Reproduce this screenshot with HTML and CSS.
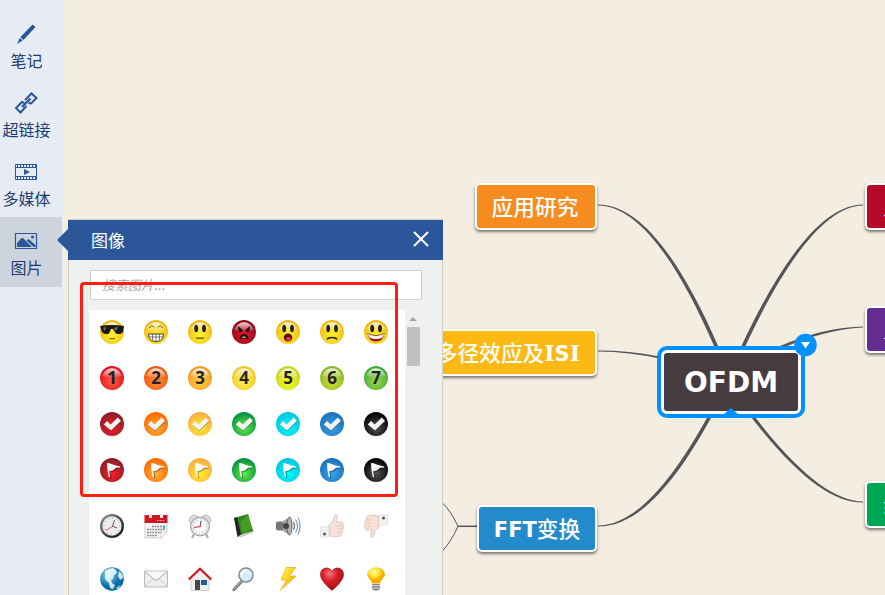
FILE: index.html
```html
<!DOCTYPE html>
<html lang="zh-CN">
<head>
    <meta charset="UTF-8">
    <meta name="viewport" content="width=device-width, initial-scale=1.0">
    <title>OFDM</title>
    <link rel="stylesheet" href="styles.css">
</head>
<body>

    <nav class="sidebar">
        <a class="tool">
            <svg width="24" height="24" viewBox="0 0 24 24"><path d="M18.500 2.500l3 2.500L9.500 18 6.300 15.200zM5.700 16l3 2.600L3 22z" fill="#2b579a"/></svg>
            <span>笔记</span>
        </a>
        <a class="tool">
            <svg width="24" height="24" viewBox="0 0 24 24" fill="none" stroke="#2b579a" stroke-width="2">
                <path d="M12.500 7.500l5-5 5 4.500-5.500 5.500-2.500-.5M11 9l1.500-1.500M12.500 15l-6 6.500-4.500-4.500 6-6 2.500 1"/>
                <path d="M8 16l8.500-8.500" stroke-width="2.400"/>
            </svg>
            <span>超链接</span>
        </a>
        <a class="tool">
            <svg width="24" height="24" viewBox="0 0 24 24">
                <path d="M1.500 4.500h21v15h-21zM1 7.500h22M1 16.500h22" fill="none" stroke="#2b579a"/>
                <path d="M3 6h19M3 18h19" stroke="#2b579a" stroke-width="2" stroke-dasharray="1 2"/>
                <path d="M10 9l6 3-6 3z" fill="#2b579a"/>
            </svg>
            <span>多媒体</span>
        </a>
        <a class="tool active">
            <svg width="24" height="24" viewBox="0 0 24 24">
                <path d="M1.500 4.500h21v15h-21z" fill="none" stroke="#2b579a" stroke-width="1.200"/>
                <path d="M3 18v-4l4.500-5h1.500l9 9zM12.500 11.500l2-1.500 7 6v2h-2z" fill="#2b579a"/>
                <circle cx="18.500" cy="8" r="1.600" fill="#2b579a"/>
            </svg>
            <span>图片</span>
        </a>
    </nav>

    <main class="canvas">
        <svg class="lines" width="885" height="595" fill="#54555a">
            <path d="M598 204.500C641 204.500 681 261 718.500 347L714.500 347C678 263 639 206 598 205.500z"/>
            <path d="M863 204.500C823 204.500 781 261 741 347L745 347C784 263 825 206 863 205.500z"/>
            <path d="M598 350.500Q630 350.500 658 356.300V358.300Q630 352 598 351.500z"/>
            <path d="M863 326.500Q825 327 780 346V349Q825 329.500 863 327.500z"/>
            <path d="M598 525.500C632 525 667 490 707.500 417L711.500 417C670 493 633 527 598 526.500z"/>
            <path d="M863 501.500C836 501 801 477 755 417L751 417C799 479 834 503 863 502.500z"/>
            <path d="M442 502.500Q451 511 458 526.300Q451 542 442 551.500" fill="none" stroke="#54555a"/>
            <path d="M458 526.300H478" stroke="#54555a" stroke-width="1.500"/>
        </svg>

        <div class="node research">应用研究</div>
        <div class="node multipath">多径效应及<b><i>I</i>S<i>I</i></b></div>
        <div class="node fft"><b>FFT</b>变换</div>
        <div class="node right1">人</div>
        <div class="node right2">人</div>
        <div class="node right3">纟</div>

        <div class="root">OFDM</div>
        <svg class="marks" width="160" height="90" viewBox="0 0 160 90">
            <path d="M73 81l8-7 8 7z" fill="#0091ff"/>
            <circle cx="155.500" cy="11" r="11.200" fill="#0091ff"/>
            <path d="M151 8h9l-4.500 6.500z" fill="#fff"/>
        </svg>
    </main>

    <section class="panel">
        <header>
            <h1>图像</h1>
            <svg width="16" height="16" viewBox="0 0 16 16"><path d="M1 1l14 14M15 1L1 15" stroke="#fff" stroke-width="2"/></svg>
        </header>
        <div class="search">搜索图片...</div>
        <div class="browser">
            <div class="icons">
                <div class="grid" id="badges"></div>
                <div class="grid objects" id="objects"></div>
            </div>
            <div class="scrollbar">
                <div class="up"></div>
                <div class="thumb"></div>
            </div>
        </div>
    </section>

    <div class="frame"></div>

    <script src="icons.js"></script>
</body>
</html>
```
FILE: styles.css
```css
* {
    box-sizing: border-box;
}
body {
    margin: 0;
    height: 595px;
    overflow: hidden;
    position: relative;
    display: flex;
    background: #f4ede1;
    font-family: "Noto Sans CJK SC", sans-serif;
}
.sidebar {
    width: 63px;
    height: 595px;
    padding-top: 10px;
    background: #e6ebf4;
}
.tool {
    display: flex;
    flex-direction: column;
    align-items: center;
    width: 62px;
    height: 69px;
    padding: 12px 9px 0 0;
    font-size: 16px;
    line-height: 28px;
    white-space: nowrap;
    color: #1f3c70;
}
.tool svg {
    flex: none;
    margin-right: 2px;
}
.tool.active {
    height: 70px;
    background: #ced4de;
}

/* mind map */
.canvas {
    position: absolute;
    inset: 0 0 0 63px;
    overflow: hidden;
}
.lines {
    position: absolute;
    left: -63px;
    top: 0;
}
.node {
    position: absolute;
    height: 47px;
    border: 2px solid #fff;
    border-radius: 5px;
    box-shadow: 0 2px 3px rgba(0, 0, 0, 0.5);
    color: #fff;
    font: 500 21.700px/45px "DejaVu Sans", "Noto Sans CJK SC", sans-serif;
    text-align: center;
    white-space: nowrap;
}
.node b {
    font-size: 21px;
}
.node i {
    font-family: "DejaVu Serif", serif;
    font-style: normal;
    font-size: 22px;
}
.research {
    left: 412px;
    top: 183px;
    width: 122px;
    padding-right: 2px;
    background: #f68b1f;
}
.multipath {
    left: 348px;
    top: 329px;
    width: 186px;
    padding-right: 15px;
    text-align: right;
    background: #fdb913;
}
.fft {
    left: 414px;
    top: 505px;
    width: 120px;
    background: #238acb;
}
.right1, .right2, .right3 {
    left: 802px;
    width: 130px;
    padding-left: 16px;
    text-align: left;
}
.right1 {
    top: 183px;
    background: #b50b29;
}
.right2 {
    top: 306px;
    background: #662c91;
}
.right3 {
    top: 481px;
    background: #00a651;
}
.root {
    position: absolute;
    left: 598px;
    top: 350px;
    width: 140px;
    height: 64px;
    border: 3px solid #fff;
    border-radius: 6px;
    box-shadow: 0 0 0 4px #0091ff;
    background: #463c3f;
    color: #fff;
    font: bold 28px/59px "DejaVu Sans", sans-serif;
    text-align: center;
}
.marks {
    position: absolute;
    left: 587px;
    top: 334px;
    overflow: visible;
}

/* image panel */
.panel {
    position: absolute;
    left: 68px;
    top: 219px;
    width: 375px;
    height: 376px;
    border: 1px solid #cfcfcf;
    border-bottom: 0;
    background: #eff1ef;
}
.panel header {
    position: relative;
    display: flex;
    align-items: center;
    justify-content: space-between;
    height: 40px;
    margin: 0 -1px;
    padding: 0 14px 2px 23px;
    background: #2b579a;
    color: #fff;
}
.panel header::before {
    content: "";
    position: absolute;
    left: -11px;
    top: 9px;
    border: solid transparent;
    border-width: 11px 11px 11px 0;
    border-right-color: #2b579a;
}
.panel h1 {
    margin: 0;
    font-size: 17px;
    font-weight: normal;
}
.search {
    width: 332px;
    height: 30px;
    margin: 10px 0 0 21px;
    padding-left: 11px;
    border: 1px solid #d0d0d0;
    background: #fff;
    color: #a5a5a5;
    font-size: 13px;
    font-style: italic;
    line-height: 28px;
}
.browser {
    display: flex;
    height: 285px;
    margin: 10px 0 0 20px;
}
.icons {
    width: 316px;
    padding-left: 1px;
    background: #fff;
}
.grid {
    display: grid;
    grid-template-columns: repeat(7, 44px);
    grid-auto-rows: 46px;
    place-items: center;
    margin-top: -1px;
}
.objects {
    grid-auto-rows: 53px;
    margin-top: 6px;
}
.grid svg {
    display: block;
    overflow: visible;
}
.grid text {
    font: bold 17px "Open Sans", sans-serif;
    text-anchor: middle;
    fill: #222;
}
.scrollbar {
    width: 16px;
    padding: 7px 1px 0 2px;
    background: #f0f0f0;
}
.up {
    width: 8px;
    margin-left: 2px;
    border: solid transparent;
    border-width: 0 4px 4px;
    border-bottom-color: #a3a3a3;
}
.thumb {
    height: 39px;
    margin-top: 6px;
    background: #c1c1c1;
}
.frame {
    position: absolute;
    left: 80px;
    top: 282px;
    width: 318px;
    height: 215px;
    border: 3px solid #ff1f12;
    border-radius: 4px;
}
```
FILE: icons.js
```js
let gradientId = 0;

function icon(body) {
    return `<svg width="24" height="24" viewBox="0 0 24 24">${body}</svg>`;
}

// round badge: light colour in the middle, dark colour on the rim
function ball(inner, outer, body, gloss) {
    const id = 'g' + gradientId++;
    let shine = gloss ? '<path d="M2.5 10a9.700 9.700 0 0 1 19 0Q12 13 2.500 10z" fill="url(#shine)"/>' : '';
    return icon(`<defs><radialGradient id="${id}" cx=".5" cy=".65" r=".6"><stop stop-color="${inner}"/><stop offset="1" stop-color="${outer}"/></radialGradient>
        <linearGradient id="shine" x2="0" y2="1"><stop stop-color="#fff" stop-opacity=".85"/><stop offset="1" stop-color="#fff" stop-opacity=".1"/></linearGradient></defs>
        <circle cx="12" cy="12" r="12" fill="url(#${id})"/>${shine}${body}`);
}

const eyes = '<ellipse cx="8.200" cy="8.500" rx="1.900" ry="3.800" fill="#222"/><ellipse cx="16" cy="8.500" rx="1.900" ry="3.800" fill="#222"/>';

const faces = [
    '<path d="M0 6q12-2 24 0l-1 6q-2 3-7 1.500L13 9h-2l-2 4.500q-5 1.500-7-1.500z" fill="#181818"/><path d="M3 8l3-1-1 4zM14 8l4-1-2 4z" fill="#777"/><path d="M9.500 18.500q3 1 5.500-.5" stroke="#553c00" fill="none"/>',
    '<path d="M5.500 8q2-4 4.500-.5M14 7.500q2.500-3.500 4.500.5" fill="none" stroke="#6b5200"/><path d="M4.500 14h15q0 7.500-7.500 7.500T4.500 14z" fill="#fff" stroke="#453b20"/><path d="M5 17h14M8.500 14v6.500M12 14v7M15.500 14v6.500" stroke="#555" stroke-width=".8"/>',
    eyes + '<path d="M8 18.200h8" stroke="#77600c" stroke-width="1.500"/>',
    '<path d="M6 6l5 4.500-2 1.500q-3 0-3-6zM18 6l-5 4.500 2 1.500q3 0 3-6z" fill="#210306"/><path d="M7.500 19.500q0-5.500 4.500-5.500t4.500 5.500l-3-1h-3z" fill="#350408"/><path d="M9.500 17.500q2.500-2 5 0z" fill="#fff"/>',
    eyes + '<ellipse cx="12" cy="17.500" rx="4.300" ry="4" fill="#5c0d08"/><ellipse cx="12.500" cy="19" rx="2.700" ry="2" fill="#df3c38"/>',
    eyes + '<path d="M7 19.500q1-2 5-2t5 2" stroke="#222" stroke-width="1.500" fill="none"/>',
    eyes + '<path d="M3.500 13.500q8.500 4 17 0-1.500 8-8.500 8t-8.500-8z" fill="#a60e20"/><path d="M3.500 13.500q8.500 4 17 0l-2 4q-6.500 3-13 0z" fill="#fff"/><path d="M3.500 13.500q8.500 4 17 0" fill="none" stroke="#533400" stroke-width=".7"/>'
];
const numbers = [['#ff6044', '#e30c1c'], ['#ff8b38', '#ed5910'], ['#ffd33e', '#f6982b'], ['#fff04b', '#edc82b'], ['#f5ff28', '#c7d321'], ['#d1df35', '#88ba29'], ['#a4d24e', '#3fac39']];
const colors = [['#ff1d24', '#8c1d2c'], ['#ffb13f', '#ff6900'], ['#fff22e', '#fbac43'], ['#66ef49', '#079340'], ['#00fbff', '#02c7dd'], ['#39a3e8', '#1d72bc'], ['#555', '#030303']];

const check = '<path d="M4.500 13.500l3-3.300 3.500 3.500 7.500-7 3 3.300L11 19.500z" fill="#000" opacity=".3"/><path d="M3.800 12.500l3.200-3.500 3.600 3.500L17.800 5.500l3.200 3.500L11 18.600z" fill="#f3f3f3"/>';
const flag = '<path d="M8 6l13 3.500-.5 1.300q-4-.5-6 2.200l-4 1.500.9 5.700-1.700.3z" fill="#000" opacity=".3"/><path d="M7 5q1.500-.5 5 1.300 3.500 1.500 8.200 2.200v1.200q-4.500-.8-6.700 2.300-1.500 1-4.300 1.300l.9 6H8.800Q7 12.500 7 5z" fill="#fafafa"/>';

let html = '';
faces.forEach((face, i) => html += i === 3 ? ball('#d91d2a', '#8e0818', face, true) : ball('#fff52e', '#eeb714', face, true));
numbers.forEach((c, i) => html += ball(c[0], c[1], `<text x="12" y="18">${i + 1}</text>`, true));
colors.forEach(c => html += ball(c[0], c[1], check));
colors.forEach(c => html += ball(c[0], c[1], flag));
document.getElementById('badges').innerHTML = html;

const hand = '<path d="M9 11l4-3.500 1.500-6q.5-1.500 2-.5 1.500 1.500.5 4L16 8h5.500q1.500.2 1.500 2 1 1 .2 2.800.8 1.500-.4 2.800.5 1.700-.8 2.600 0 2-1.500 3.800Q14 24 9 21.500z" fill="#f7e0d5" stroke="#d9b9aa" stroke-width=".7"/><path d="M16.500 11.500h6M17 15h5.500M17 18.300h5" stroke="#dcbba9" stroke-width=".6"/><path d="M.5 13h8.500v10H.5z" fill="#f2f2f2" stroke="#d2d2d2" stroke-width=".6"/><circle cx="4.500" cy="20" r="1.500" fill="#555"/>';

const objects = [
    // clock
    '<defs><linearGradient id="metal" x2="1" y2="1"><stop stop-color="#999"/><stop offset="1" stop-color="#080808"/></linearGradient></defs><circle cx="12" cy="12" r="12" fill="url(#metal)"/><circle cx="12" cy="12" r="9.700" fill="#ededed"/><circle cx="12" cy="12" r="8" fill="none" stroke="#777" stroke-dasharray=".7 3.490"/><path d="M12.500 12.500l2-6.500M12 12l5 2" stroke="#333" stroke-width=".8"/><path d="M13 12l-7 4.500" stroke="#e44" stroke-width=".9"/>',
    // calendar
    '<path d="M1 7h22v10l-6 7H1z" fill="#f5f5f5" stroke="#bbb" stroke-width=".7"/><path d="M.5 1h23v8H.5z" fill="#ce1720"/><path d="M5 0h3v4H5zM16 0h3v4h-3z" fill="#eee"/><path d="M13 6.500h7" stroke="#f3b5b5" stroke-dasharray="1 .5"/><path d="M8 12.500h12M3 15.500h17M3 18.500h15M3 21.500h10" stroke="#7b7b7b" stroke-width="1.300" stroke-dasharray="1.700 1"/><path d="M19 11.500h2v4h-2z" fill="#48afc4"/><path d="M17 24v-6h6z" fill="#fff" stroke="#bbb" stroke-width=".6"/>',
    // alarm clock
    '<path d="M6 20l-2 4M18 20l2 4" stroke="#aaa" stroke-width="2"/><path d="M1 7Q1 1 8 1l2 2-7 6zM23 7q0-6-7-6l-2 2 7 6z" fill="#ddd" stroke="#aaa" stroke-width=".7"/><circle cx="12" cy="12.500" r="9.500" fill="#ddd" stroke="#9c9c9c"/><circle cx="12" cy="12.500" r="7.500" fill="#fafafa"/><circle cx="12" cy="12.500" r="6.500" fill="none" stroke="#888" stroke-dasharray=".7 2.700"/><path d="M12 13l1-6" stroke="#444"/><path d="M12.500 12.500l-6.500 1" stroke="#e22"/>',
    // book
    '<path d="M2 4l14-4 5.500 18L8 23z" fill="#31851b"/><path d="M8 8l8-7 4 13-9 7z" fill="#57ad2c" opacity=".6"/><path d="M2 4l3-1 4.500 19.500-4 .5z" fill="#222"/><path d="M6 23l2-2 13-4 .5 1.500L9 23.500z" fill="#cfcfcf"/>',
    // speaker
    '<path d="M0 8.500l2-1h5L14 3v18.500l-7-5H2l-2-1z" fill="#777"/><path d="M7 7.500L14 3v18.500l-7-5z" fill="#a5a5a5"/><ellipse cx="13.500" cy="12" rx="2.500" ry="9" fill="#b4b4b4" stroke="#666"/><circle cx="10" cy="12" r="3" fill="#444"/><path d="M17.500 8q2 4 0 8" fill="none" stroke="#777" stroke-width="1.200"/><path d="M19.500 5.500q4 6.500 0 13M22 3.500q4 8.500 0 17" fill="none" stroke="#5488ba"/>',
    hand,
    `<g transform="rotate(180 12 12)">${hand}</g>`,
    // globe
    '<defs><radialGradient id="sea" cx=".35" cy=".3"><stop stop-color="#92dbf5"/><stop offset="1" stop-color="#086fa5"/></radialGradient></defs><circle cx="12" cy="12" r="11.800" fill="url(#sea)"/><path d="M5 4q4-3 8-3l3 2 1 3-3 2-1 4-2 1 1 3 3 2-2 4-3-1-1-5-4-4V7zM19 4q4 3 4 7l-3 2-2-4zM16 21l5-3-3 4z" fill="#f2fbff" opacity=".85"/>',
    // mail
    '<path d="M.5 4h23v16H.5z" fill="#efefef" stroke="#bbb"/><path d="M1 19.500l8-8M23 19.500l-8-8" stroke="#ccc"/><path d="M1 4.500l9 8q2 1.500 4 0l9-8" fill="#f8f8f8" stroke="#aaa"/>',
    // house
    '<path d="M3 10l9-8 9 8v13.500H3z" fill="#eee" stroke="#bbb" stroke-width=".6"/><path d="M7 13h5v10H7z" fill="#474747"/><path d="M13 13h6v5h-6z" fill="#245b91"/><path d="M.8 12.500L12 1.700l11.200 10.800" fill="none" stroke="#d3151b" stroke-width="2.200"/>',
    // magnifier
    '<path d="M9.500 14.500l-7.500 8" stroke="#777" stroke-width="3.200" stroke-linecap="round"/><path d="M9 14.500l-7 7.500" stroke="#ccc" stroke-linecap="round"/><circle cx="14" cy="8" r="7" fill="#d5ecfb" stroke="#888" stroke-width="1.500"/><path d="M9.500 8q1-4.500 5-4.500" fill="none" stroke="#fff" stroke-width="2"/>',
    // lightning
    '<defs><linearGradient id="bolt" x2="1" y2="1"><stop offset=".2" stop-color="#fff02c"/><stop offset="1" stop-color="#f28b00"/></linearGradient></defs><path d="M10 .5h9.500L13.500 9H20L4.500 23.500 10.500 13H5z" fill="url(#bolt)" stroke="#f3a225" stroke-width=".7"/>',
    // heart
    '<defs><radialGradient id="heart" cx=".4" cy=".25" r=".8"><stop stop-color="#f77780"/><stop offset=".4" stop-color="#d7212a"/><stop offset="1" stop-color="#9e0810"/></radialGradient></defs><path d="M12 23.500C7 19 .5 13 .5 7.500c0-7.500 9-8.500 11.500-3 2.500-5.500 11.500-4.500 11.500 3C23.500 13 17 19 12 23.500z" fill="url(#heart)" stroke="#9f1017" stroke-width=".7"/>',
    // bulb
    '<defs><radialGradient id="bulb" cx=".4" cy=".3"><stop stop-color="#fffbb0"/><stop offset=".6" stop-color="#ffdf22"/><stop offset="1" stop-color="#f3ae00"/></radialGradient></defs><path d="M8 16.500q0-2-2.500-4.500Q3 9 3 8a9 7.700 0 0 1 18 0q0 1-2.500 4Q16 14.500 16 16.500z" fill="url(#bulb)"/><path d="M8 17h8v5l-2 1.500h-4L8 22z" fill="#888"/><path d="M8 18.500h8M8 21h8" stroke="#ddd"/>'
];
document.getElementById('objects').innerHTML = objects.map(icon).join('');
```
